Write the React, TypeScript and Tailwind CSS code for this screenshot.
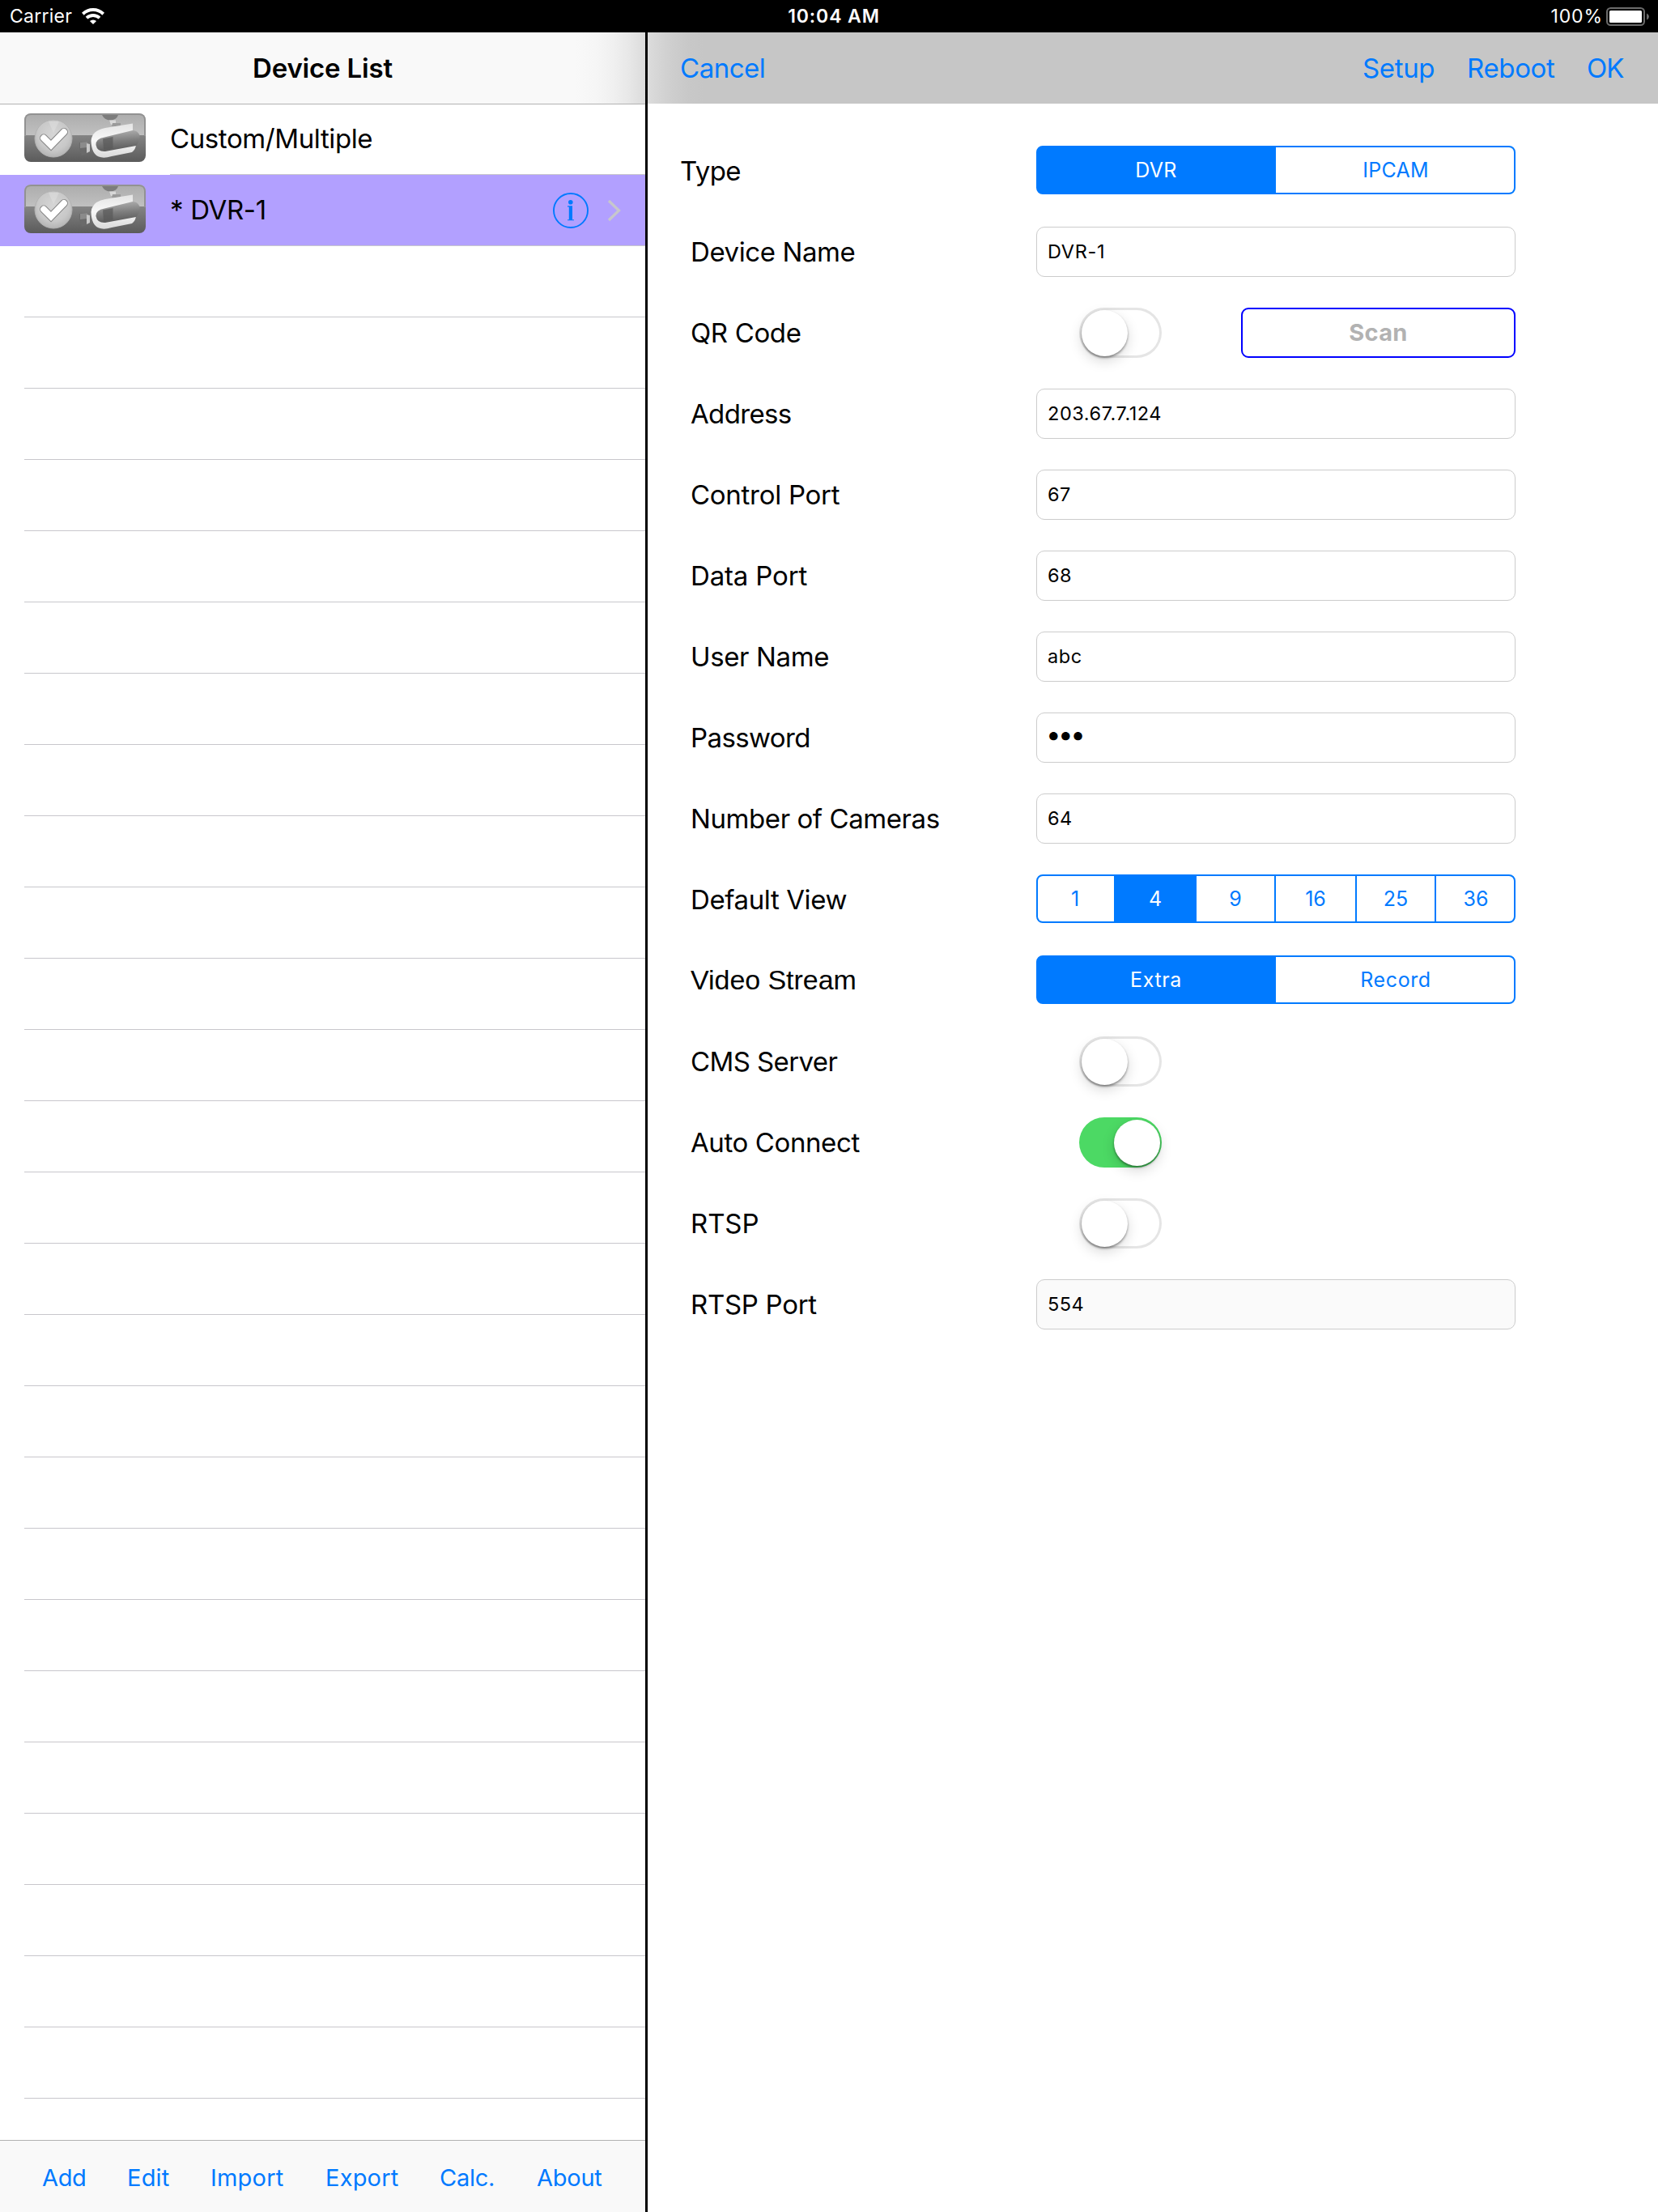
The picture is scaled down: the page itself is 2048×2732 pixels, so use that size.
import type { ReactNode } from "react";

function CameraBadge() {
  return (
    <svg width="150" height="60" viewBox="0 0 150 60" className="shrink-0">
      <defs>
        <linearGradient id="badgeTop" x1="0" y1="0" x2="0" y2="1">
          <stop offset="0" stopColor="#acacac" />
          <stop offset="1" stopColor="#c1c1c1" />
        </linearGradient>
        <linearGradient id="badgeBottom" x1="0" y1="0" x2="0" y2="1">
          <stop offset="0" stopColor="#848484" />
          <stop offset="1" stopColor="#5b5b5b" />
        </linearGradient>
        <radialGradient id="badgeDisc" cx="0.5" cy="0.4" r="0.6">
          <stop offset="0" stopColor="#d6d6d6" />
          <stop offset="0.7" stopColor="#c8c8c8" />
          <stop offset="1" stopColor="#b4b4b4" />
        </radialGradient>
        <linearGradient id="badgeShell" x1="0" y1="0" x2="0" y2="1">
          <stop offset="0" stopColor="#e4e4e4" />
          <stop offset="0.5" stopColor="#f8f8f8" />
          <stop offset="1" stopColor="#dadada" />
        </linearGradient>
        <linearGradient id="badgeTube" x1="0.4" y1="0" x2="0.55" y2="1">
          <stop offset="0.1" stopColor="#a6a6a6" />
          <stop offset="0.5" stopColor="#7e7e7e" />
          <stop offset="0.9" stopColor="#5f5f5f" />
        </linearGradient>
        <clipPath id="badgeClip">
          <rect width="150" height="60" rx="8" />
        </clipPath>
      </defs>
      <g clipPath="url(#badgeClip)">
        <rect width="150" height="28" fill="url(#badgeTop)" />
        <rect y="27" width="150" height="33" fill="url(#badgeBottom)" />
        <path d="M1 28V8Q1 1 8 1H142Q149 1 149 8V28" fill="none" stroke="#929292" strokeWidth="2" />
        <circle cx="36" cy="31" r="23" fill="url(#badgeDisc)" stroke="#b2b2b2" />
        <path d="M30 10L36 24L43 10Z" fill="#e6e6e6" opacity="0.4" />
        <path d="M24 30.500L33 39.500L49 23" fill="none" stroke="#858585" strokeWidth="9.800" strokeLinecap="round" />
        <path d="M24 30.500L33 39.500L49 23" fill="none" stroke="#fff" strokeWidth="7.800" strokeLinecap="round" />
        <path d="M96 2H116Q114 8 106 8.500Q99 8 96 2Z" fill="#7c7c7c" />
        <path d="M105 8.500H113V14H107Z" fill="#d8d8d8" />
        <path d="M109 12H119V16H108Z" fill="#9a9a9a" />
        <path d="M68 36L78 35V50L71 52Q67 44 68 36Z" fill="#6a6a6a" />
        <path d="M69 36L78 35V42L69 43Z" fill="#8b8b8b" />
        <path d="M77 37L81 38V47L77 49Z" fill="#c9c9c9" />
        <path d="M134 12.500L100 18Q83.500 21 82.500 34Q83 50 92 53.500Q98 56 108 53L133 48Q138 44 138 38L134 22Z" fill="url(#badgeShell)" />
        <path d="M99 29.500Q88 31.500 88.500 39Q90 47.500 100 47L138 40Q143.500 34 142.500 27Q140 21 134 21Z" fill="url(#badgeTube)" />
        <path d="M97 31.500L109.500 29V43.500L98 45Z" fill="#585858" opacity="0.7" />
      </g>
    </svg>
  );
}

function WifiIcon() {
  return (
    <svg width="28" height="20" viewBox="0 0 28 20" fill="none" stroke="#fff">
      <path d="M1.300 7.200A18.400 18.400 0 0 1 26.700 7.200" strokeWidth="4" />
      <path d="M6 12.200A11.600 11.600 0 0 1 22 12.200" strokeWidth="3.800" />
      <path d="M14 20L9.900 16A6 6 0 0 1 18.100 16Z" fill="#fff" stroke="none" />
    </svg>
  );
}

function BatteryIcon() {
  return (
    <svg width="53" height="23" viewBox="0 0 53 23">
      <rect x="1" y="1" width="46" height="21" rx="4.500" fill="none" stroke="#6b6b6b" strokeWidth="2" />
      <rect x="4" y="4" width="40" height="15" rx="1.500" fill="#fff" />
      <path d="M50 7.500Q53 9 53 11.500Q53 14 50 15.500Z" fill="#6b6b6b" />
    </svg>
  );
}

function InfoIcon() {
  return (
    <svg width="44" height="44" viewBox="0 0 44 44">
      <circle cx="22" cy="22" r="21" fill="none" stroke="#007aff" strokeWidth="1.900" />
      <circle cx="21.800" cy="11.700" r="2.800" fill="#007aff" />
      <path d="M18 16.300H24V33.200H26V34.300H18V33.200H19.800V17.400H18Z" fill="#007aff" />
    </svg>
  );
}

function Chevron() {
  return (
    <svg width="18" height="28" viewBox="0 0 18 28" fill="none" stroke="#c7c7cc" strokeWidth="3.300">
      <path d="M2 2L14.500 14L2 26" />
    </svg>
  );
}

function StatusBar() {
  return (
    <div className="flex h-10 items-center bg-black text-[23px] text-white">
      <div className="flex flex-1 items-center pl-[12px]">
        <span className="w-[89px] pt-[2px] tracking-[0.26px]">Carrier</span>
        <WifiIcon />
      </div>
      <span className="pt-[2px] pl-[11px] font-semibold tracking-[0.9px]">10:04 AM</span>
      <div className="flex flex-1 items-center justify-end pr-[11px]">
        <span className="mr-[4px] pt-[2px] tracking-[0.9px]">100%</span>
        <BatteryIcon />
      </div>
    </div>
  );
}

function DeviceCell({ children, selected }: { children: ReactNode; selected?: boolean }) {
  return (
    <div className={selected ? "flex h-[88px] bg-[#b2a0ff] pl-[30px]" : "flex h-[88px] pl-[30px]"}>
      <div className="w-[180px] pt-3">
        <CameraBadge />
      </div>
      <div className="flex flex-1 items-center border-b border-[#c8c7cc]">{children}</div>
    </div>
  );
}

const actions = [
  { name: "Add", cls: "w-[105px] tracking-[-0.35px]" },
  { name: "Edit", cls: "w-[103px] tracking-[0.2px]" },
  { name: "Import", cls: "w-[142px] tracking-[0.2px]" },
  { name: "Export", cls: "w-[141px] tracking-[0.2px]" },
  { name: "Calc.", cls: "w-[120px] tracking-[-0.25px]" },
  { name: "About", cls: "tracking-[-0.25px]" },
];

function Sidebar() {
  return (
    <aside className="flex w-[797px] shrink-0 flex-col">
      <header className="relative z-10 flex h-[89px] items-center justify-center border-b border-[#b2b2b2] bg-[linear-gradient(to_right,#f9f9f9_0,#f9f9f9_710px,#f6f6f6_735px,#f0f0f0_757px,#e8e8e8_776px,#dbdbdb_797px)] pt-px text-[33px] font-semibold tracking-[-0.17px]">
        Device List
      </header>
      <div className="-mt-px flex-1 overflow-hidden">
        <DeviceCell>
          <span className="tracking-[-0.4px]">Custom/Multiple</span>
        </DeviceCell>
        <DeviceCell selected>
          <span className="flex-1 tracking-[-0.33px]">* DVR-1</span>
          <div className="flex items-center gap-[23px] pr-[29px]">
            <InfoIcon />
            <Chevron />
          </div>
        </DeviceCell>
        {Array.from({ length: 26 }, (_, i) => (
          <div key={i} className="ml-[30px] h-[88px] border-b border-[#c8c7cc]" />
        ))}
      </div>
      <footer className="flex h-[89px] items-center border-t border-[#b2b2b2] bg-[#f9f9f9] pt-[4px] pl-[52px] text-[29px] text-[#007aff]">
        {actions.map((a) => (
          <button key={a.name} className={`text-left ${a.cls}`}>
            {a.name}
          </button>
        ))}
      </footer>
    </aside>
  );
}

function Row({ label, cls, children }: { label: string; cls: string; children: ReactNode }) {
  return (
    <div className="flex h-[100px] items-start">
      <div className={`flex h-[62px] w-[480px] items-center ${cls}`}>{label}</div>
      {children}
    </div>
  );
}

function Field({ children, cls = "bg-white tracking-[0.55px]" }: { children: ReactNode; cls?: string }) {
  return (
    <div className={`flex h-[62px] w-[592px] items-center rounded-[10px] border border-[#cccccc] pl-[13px] text-[23.5px] ${cls}`}>
      {children}
    </div>
  );
}

function Segments({ items }: { items: { name: string; cls: string }[] }) {
  return (
    <div className="flex h-[60px] w-[592px] overflow-hidden rounded-lg border-2 border-[#007aff] bg-[#007aff] text-[25px]">
      {items.map((s) => (
        <div key={s.name} className={`flex items-center justify-center border-[#007aff] ${s.cls}`}>
          {s.name}
        </div>
      ))}
    </div>
  );
}

function Switch({ on }: { on?: boolean }) {
  return (
    <div
      className={
        on
          ? "ml-[53px] flex h-[62px] w-[102px] items-center justify-end rounded-full bg-[#4cd964] pr-[2.5px]"
          : "ml-[53px] flex h-[62px] w-[102px] items-center rounded-full bg-white pl-[2.5px] shadow-[inset_0_0_0_3px_#e5e5e5]"
      }
    >
      <div className="size-[57px] rounded-full bg-white shadow-[0_6px_16px_rgba(0,0,0,0.15),0_2px_3px_rgba(0,0,0,0.4)]" />
    </div>
  );
}

const on = "bg-[#007aff] text-white";
const off = "bg-white text-[#007aff]";

function Settings() {
  return (
    <main className="flex flex-1 flex-col bg-white">
      <header className="flex h-[88px] items-center bg-[linear-gradient(to_right,#dcdcdc_0,#d5d5d5_14px,#cecece_30px,#c8c8c8_50px,#c6c6c6_70px)] pt-[2px] pl-10 text-[#007aff]">
        <span className="flex-1 tracking-[-0.48px]">Cancel</span>
        <span className="w-[129px] tracking-[-0.36px]">Setup</span>
        <span className="w-[148px] tracking-[-0.35px]">Reboot</span>
        <span className="w-[88px] tracking-[-1px]">OK</span>
      </header>
      <section className="pt-[52px]">
        <Row label="Type" cls="pt-[2px] pl-10 tracking-[-0.56px]">
          <Segments
            items={[
              { name: "DVR", cls: `w-[294px] pr-[2px] tracking-[0.4px] ${on}` },
              { name: "IPCAM", cls: `w-[294px] pl-[2px] tracking-[0.25px] ${off}` },
            ]}
          />
        </Row>
        <Row label="Device Name" cls="pt-[2px] pl-[53px] tracking-[-0.4px]">
          <Field cls="bg-white tracking-[0.7px]">DVR-1</Field>
        </Row>
        <Row label="QR Code" cls="pt-[2px] pl-[53px] tracking-[-0.36px]">
          <Switch />
          <div className="ml-[98px] flex h-[62px] w-[339px] items-center justify-center rounded-[9px] border-2 border-[#0000ff] pt-px text-[29px] font-bold tracking-[0.28px] text-[#b2b2b2]">
            Scan
          </div>
        </Row>
        <Row label="Address" cls="pt-[2px] pl-[53px] tracking-[-0.65px]">
          <Field>203.67.7.124</Field>
        </Row>
        <Row label="Control Port" cls="pt-[2px] pl-[53px] tracking-[-0.28px]">
          <Field>67</Field>
        </Row>
        <Row label="Data Port" cls="pt-[2px] pl-[53px] tracking-[-0.15px]">
          <Field>68</Field>
        </Row>
        <Row label="User Name" cls="pt-[2px] pl-[53px] tracking-[-0.38px]">
          <Field>abc</Field>
        </Row>
        <Row label="Password" cls="pt-[2px] pl-[53px] tracking-[-0.6px]">
          <Field cls="bg-white pb-[7px]">
            <span className="-ml-[2px] text-[33px] leading-none tracking-[-3.5px]">•••</span>
          </Field>
        </Row>
        <Row label="Number of Cameras" cls="pt-[2px] pl-[53px] tracking-[-0.42px]">
          <Field>64</Field>
        </Row>
        <Row label="Default View" cls="pt-[2px] pl-[53px] tracking-[-0.39px]">
          <Segments
            items={[
              { name: "1", cls: `w-[94px] pr-[2px] ${off}` },
              { name: "4", cls: `w-[102px] ${on}` },
              { name: "9", cls: `w-[98px] border-r-2 ${off}` },
              { name: "16", cls: `w-[100px] border-r-2 ${off}` },
              { name: "25", cls: `w-[98px] border-r-2 ${off}` },
              { name: "36", cls: `w-[96px] pl-[2px] ${off}` },
            ]}
          />
        </Row>
        <Row label="Video Stream" cls="pb-[2px] pl-[53px] font-['Liberation_Sans',sans-serif] text-[34px] tracking-[-0.05px]">
          <Segments
            items={[
              { name: "Extra", cls: `w-[294px] pr-[2px] tracking-[0.6px] ${on}` },
              { name: "Record", cls: `w-[294px] pl-[2px] tracking-[0.6px] ${off}` },
            ]}
          />
        </Row>
        <Row label="CMS Server" cls="pt-[2px] pl-[53px] tracking-[-0.6px]">
          <Switch />
        </Row>
        <Row label="Auto Connect" cls="pt-[2px] pl-[53px] tracking-[-0.4px]">
          <Switch on />
        </Row>
        <Row label="RTSP" cls="pt-[2px] pl-[53px] tracking-[-0.1px]">
          <Switch />
        </Row>
        <Row label="RTSP Port" cls="pt-[2px] pl-[53px] tracking-[-0.3px]">
          <Field cls="bg-[#fafafa] tracking-[0.5px]">554</Field>
        </Row>
      </section>
    </main>
  );
}

export default function App() {
  return (
    <div className="flex h-[2732px] w-[2048px] flex-col bg-white font-[Inter,sans-serif] text-[33px] leading-[1.2] text-black">
      <StatusBar />
      <div className="flex min-h-0 flex-1">
        <Sidebar />
        <div className="w-[3px] shrink-0 bg-black" />
        <Settings />
      </div>
    </div>
  );
}
